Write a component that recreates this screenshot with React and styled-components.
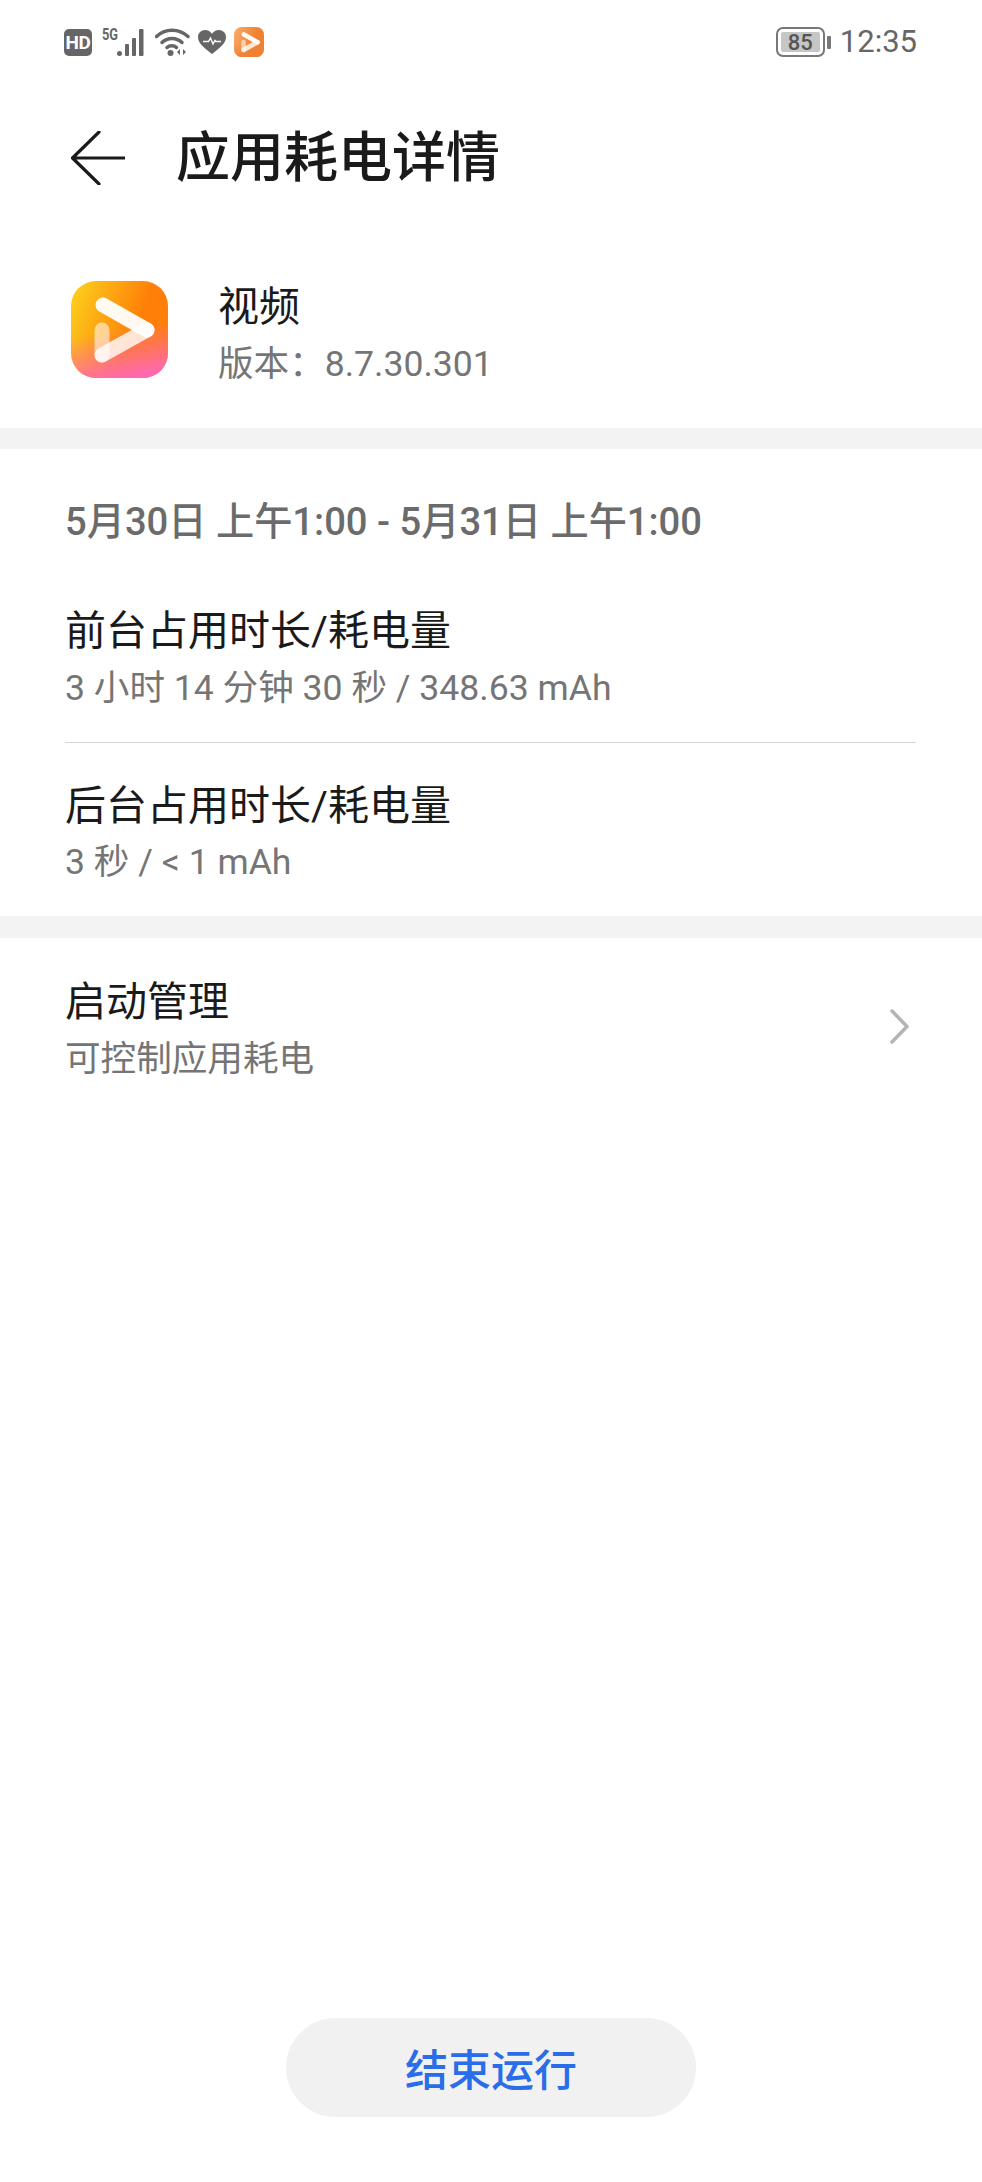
import React from "react";
import styled, { createGlobalStyle } from "styled-components";

const GlobalStyle = createGlobalStyle`
  html, body {
    margin: 0;
    padding: 0;
    background: #fff;
  }
  body {
    font-family: Roboto, "Noto Sans CJK SC", sans-serif;
  }
`;

const Page = styled.div`
  display: flex;
  flex-direction: column;
  width: 982px;
  height: 2182px;
  overflow: hidden;
  background: #fff;
`;

/* status bar */
const StatusBar = styled.div`
  display: flex;
  align-items: center;
  justify-content: space-between;
  box-sizing: border-box;
  height: 84px;
  padding: 0 65px 0 64px;
  color: #666;
`;

const StatusGroup = styled.div`
  display: flex;
  align-items: center;
  gap: ${(p) => p.$gap}px;
`;

const HdBadge = styled.span`
  display: flex;
  align-items: center;
  justify-content: center;
  width: 28px;
  height: 27px;
  border-radius: 5px;
  background: #666;
  color: #fff;
  font-size: 19px;
  font-weight: 700;
  letter-spacing: -0.5px;
`;

const Signal = styled.div`
  display: flex;
  align-items: flex-start;
  margin-left: 2px;
`;

const SignalLabel = styled.span`
  display: block;
  margin-top: -3px;
  font-size: 16px;
  line-height: 18px;
  font-weight: 700;
  transform: scaleX(0.8);
  transform-origin: left;
  width: 15px;
`;

const Battery = styled.div`
  display: flex;
  align-items: center;
  gap: 2px;
`;

const BatteryBody = styled.div`
  box-sizing: border-box;
  display: flex;
  width: 49px;
  height: 30px;
  padding: 3px;
  border: 2.5px solid #777;
  border-radius: 7px;
`;

const BatteryFill = styled.div`
  display: flex;
  align-items: center;
  justify-content: center;
  width: ${(p) => p.$level}%;
  border-radius: 2px;
  background: #c6c6c6;
  color: #555;
  font-size: 22px;
  font-weight: 500;
`;

const BatteryCap = styled.span`
  width: 4px;
  height: 13px;
  border-radius: 1px;
  background: #777;
`;

const Clock = styled.span`
  margin-left: 9px;
  font-size: 31px;
  line-height: 36px;
  color: #666;
`;

/* title bar */
const Header = styled.header`
  display: flex;
  align-items: center;
  gap: 51px;
  box-sizing: border-box;
  height: 142px;
  padding: 6px 0 0 71px;
`;

const PageTitle = styled.h1`
  margin: 0 0 -2px;
  font-size: 54px;
  line-height: 64px;
  font-weight: 500;
  color: #1a1a1a;
`;

/* app summary */
const AppInfo = styled.section`
  display: flex;
  gap: 50px;
  box-sizing: border-box;
  height: 202px;
  padding: 55px 0 0 71px;
`;

const AppText = styled.div`
  display: flex;
  flex-direction: column;
  gap: 7px;
  margin-top: 1px;
`;

const Band = styled.div`
  flex: none;
  height: ${(p) => p.$height}px;
  background: #f3f3f3;
`;

const Section = styled.section`
  display: flex;
  flex-direction: column;
  padding: 47px 66px 29px 65px;
`;

const DateRange = styled.div`
  font-size: 38.2px;
  line-height: 52px;
  font-weight: 500;
  color: #6b6b6b;
`;

const Row = styled.div`
  display: flex;
  flex-direction: column;
  gap: ${(p) => p.$gap}px;
  padding: ${(p) => p.$top}px 0 ${(p) => p.$bottom}px;
  border-bottom: ${(p) => (p.$divided ? "1px solid #d4d4d4" : "none")};
`;

const LinkRow = styled.div`
  display: flex;
  align-items: center;
  justify-content: space-between;
  padding: 39px 73px 0 65px;
`;

const RowText = styled.div`
  display: flex;
  flex-direction: column;
  gap: 7px;
`;

const RowTitle = styled.div`
  font-size: 41px;
  line-height: 50px;
  color: #1a1a1a;
`;

const RowSub = styled.div`
  font-size: 35.6px;
  line-height: 50px;
  color: #757575;
`;

const ChevronIcon = styled.svg`
  display: block;
  margin-bottom: 9px;
`;

const Footer = styled.div`
  display: flex;
  justify-content: center;
  margin-top: auto;
  padding-bottom: 65px;
`;

const EndButton = styled.button`
  width: 410px;
  height: 99px;
  padding: 0 0 2px;
  border: none;
  border-radius: 50px;
  background: #f1f1f1;
  color: #2a6de8;
  font-family: inherit;
  font-size: 43px;
  font-weight: 500;
`;

function AppLogo({ size, id, small }) {
  return (
    <svg width={size} height={size} viewBox="0 0 97 97" style={{ display: "block", flex: "none" }}>
      <defs>
        <linearGradient id={`${id}-base`} x1="0.05" y1="0.1" x2="0.85" y2="0.4">
          <stop offset="0" stopColor={small ? "#f9a766" : "#fdcb1c"} />
          <stop offset="0.85" stopColor={small ? "#f08132" : "#ff7f08"} />
        </linearGradient>
        <linearGradient id={`${id}-pink`} x1="0.5" y1="0.5" x2="0.6" y2="1">
          <stop offset="0" stopColor={small ? "#f08132" : "#ff6cae"} stopOpacity="0" />
          <stop offset="1" stopColor={small ? "#f08132" : "#ff68b4"} />
        </linearGradient>
      </defs>
      <rect width="97" height="97" rx="25" fill={`url(#${id}-base)`} />
      <rect width="97" height="97" rx="25" fill={`url(#${id}-pink)`} />
      <g fill="none" strokeWidth="15" strokeLinecap="round">
        <path d="M31 49V74" stroke="#fff" strokeOpacity="0.55" />
        <path d="M31 74L76 49" stroke="#fff" strokeOpacity="0.8" />
        <path d="M32 24L76 49" stroke="#fff" strokeOpacity="0.95" />
      </g>
    </svg>
  );
}

function SignalBars() {
  return (
    <svg width="30" height="27" viewBox="0 0 30 27" fill="#666" style={{ display: "block" }}>
      <circle cx="2.5" cy="24.5" r="2.5" />
      <rect x="8" y="15" width="4" height="12" rx="1" />
      <rect x="15" y="9" width="4" height="18" rx="1" />
      <rect x="22" y="0" width="4.5" height="27" rx="1" />
    </svg>
  );
}

function WifiIcon() {
  return (
    <svg width="35" height="28" viewBox="0 0 35 28" fill="none" style={{ display: "block" }}>
      <g stroke="#666" strokeWidth="3.500" strokeLinecap="round">
        <path d="M1.500 8.500C10 0 24 0 33 8.500" />
        <path d="M7 14.500C12.500 9 21.500 9 27 14.500" />
        <path d="M12 19.500C14.500 17 19 17 21.500 19.500" />
      </g>
      <circle cx="15.500" cy="25" r="3" fill="#666" />
      <path d="M25 21v6l-3-3zM28 21v6l3-3z" fill="#666" />
    </svg>
  );
}

function HeartIcon() {
  return (
    <svg width="28" height="24" viewBox="0 0 28 24" style={{ display: "block" }}>
      <path
        d="M14 24C8 19 0 14 0 7.200 0 3 3.200 0 7.200 0 10 0 12.500 1.500 14 3.800 15.500 1.500 18 0 20.800 0 24.800 0 28 3 28 7.200 28 14 20 19 14 24Z"
        fill="#666"
      />
      <path d="M5 11.500H10.500L12.500 8 15 14 17 10.500 18 11.500H23" fill="none" stroke="#fff" strokeWidth="1.400" />
    </svg>
  );
}

function BackArrow() {
  return (
    <svg width="54" height="54" viewBox="0 0 54 54" fill="none" style={{ display: "block" }}>
      <path d="M28 1L1.500 27L28 53M1.500 27H54" stroke="#1a1a1a" strokeWidth="3.200" strokeLinecap="round" strokeLinejoin="round" />
    </svg>
  );
}

function Chevron() {
  return (
    <ChevronIcon width="19" height="35" viewBox="0 0 19 35" fill="none">
      <path d="M2 2L17 17.500L2 33" stroke="#b4b4b4" strokeWidth="3.500" strokeLinecap="round" strokeLinejoin="round" />
    </ChevronIcon>
  );
}

export default function App() {
  return (
    <Page lang="zh-CN">
      <GlobalStyle />
      <StatusBar>
        <StatusGroup $gap={8}>
          <HdBadge>HD</HdBadge>
          <Signal>
            <SignalLabel>5G</SignalLabel>
            <SignalBars />
          </Signal>
          <WifiIcon />
          <HeartIcon />
          <AppLogo size={30} id="status-logo" small />
        </StatusGroup>
        <StatusGroup $gap={0}>
          <Battery>
            <BatteryBody>
              <BatteryFill $level={100}>85</BatteryFill>
            </BatteryBody>
            <BatteryCap />
          </Battery>
          <Clock>12:35</Clock>
        </StatusGroup>
      </StatusBar>

      <Header>
        <BackArrow />
        <PageTitle>应用耗电详情</PageTitle>
      </Header>

      <AppInfo>
        <AppLogo size={97} id="app-logo" />
        <AppText>
          <RowTitle>视频</RowTitle>
          <RowSub>版本：8.7.30.301</RowSub>
        </AppText>
      </AppInfo>

      <Band $height={21} />

      <Section>
        <DateRange>5月30日 上午1:00 - 5月31日 上午1:00</DateRange>
        <Row $top={58} $bottom={29} $gap={7} $divided>
          <RowTitle>前台占用时长/耗电量</RowTitle>
          <RowSub>3 小时 14 分钟 30 秒 / 348.63 mAh</RowSub>
        </Row>
        <Row $top={38} $bottom={0} $gap={6}>
          <RowTitle>后台占用时长/耗电量</RowTitle>
          <RowSub>3 秒 / &lt; 1 mAh</RowSub>
        </Row>
      </Section>

      <Band $height={22} />

      <LinkRow>
        <RowText>
          <RowTitle>启动管理</RowTitle>
          <RowSub>可控制应用耗电</RowSub>
        </RowText>
        <Chevron />
      </LinkRow>

      <Footer>
        <EndButton>结束运行</EndButton>
      </Footer>
    </Page>
  );
}
